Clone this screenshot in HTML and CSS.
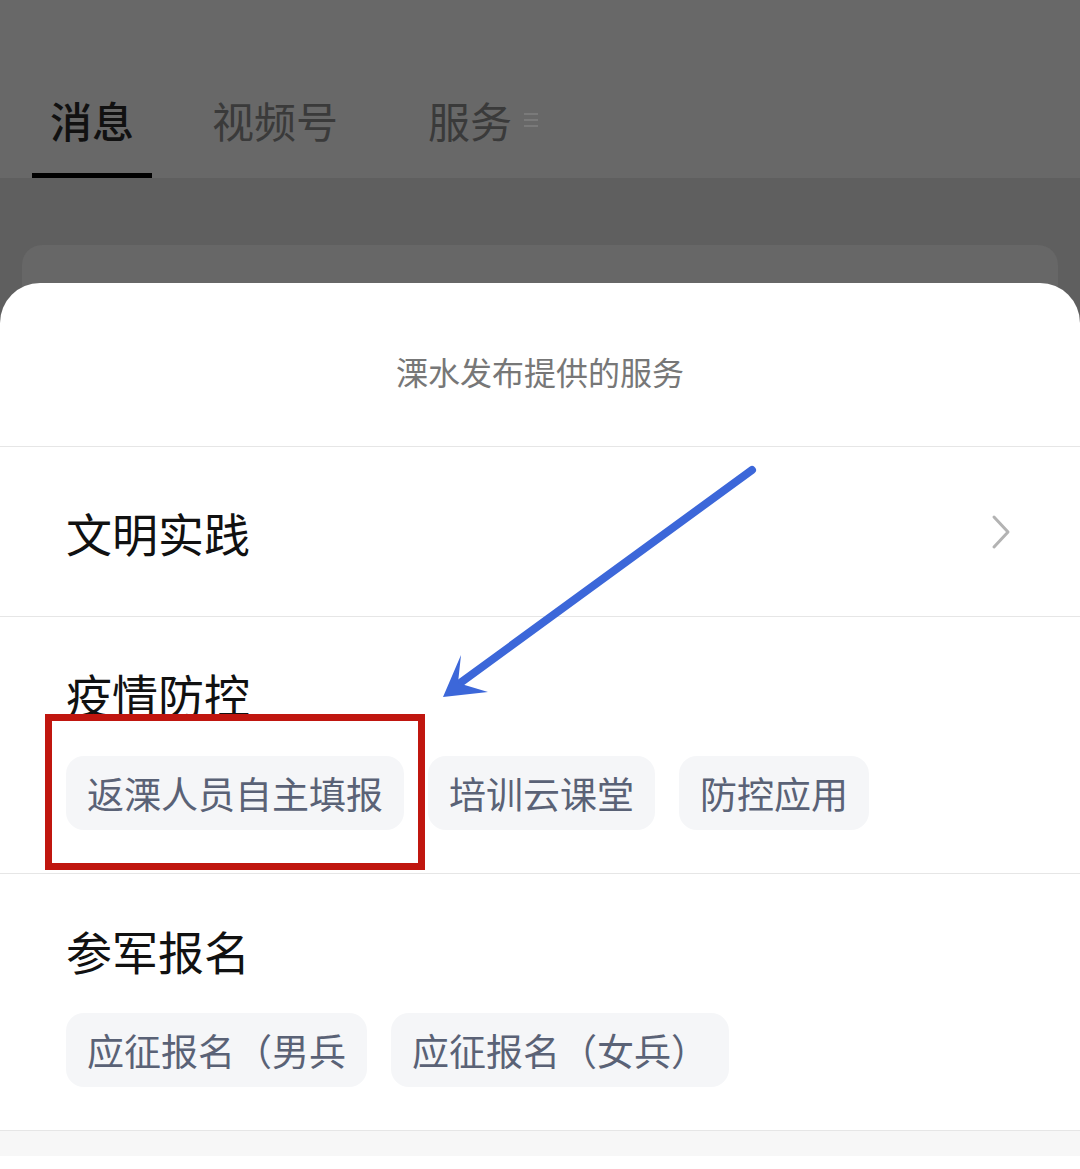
FILE: index.html
```html
<!DOCTYPE html>
<html lang="zh-CN">
<head>
  <meta charset="UTF-8" />
  <meta name="viewport" content="width=device-width, initial-scale=1" />
  <title>溧水发布提供的服务</title>
  <link rel="stylesheet" href="styles.css">
</head>
<body>
  <div class="screen">
    <header class="tabs">
      <div class="tab active">消息</div>
      <div class="tab">视频号</div>
      <div class="tab tab-service">服务<span class="menu-icon"><i></i><i></i><i></i></span></div>
    </header>

    <div class="backdrop">
      <div class="bg-card"></div>
    </div>

    <div class="sheet">
      <div class="sheet-title">溧水发布提供的服务</div>

      <div class="row-link">
        <span class="row-name">文明实践</span>
        <svg class="chevron" width="24" height="40" viewBox="0 0 24 40">
          <polyline points="4,5 18,20 4,35" fill="none" stroke="#b3b3b3" stroke-width="3" stroke-linecap="round" stroke-linejoin="round"/>
        </svg>
      </div>

      <div class="group">
        <div class="row-name">疫情防控</div>
        <div class="chips">
          <span class="chip">返溧人员自主填报</span>
          <span class="chip">培训云课堂</span>
          <span class="chip">防控应用</span>
        </div>
      </div>

      <div class="group">
        <div class="row-name">参军报名</div>
        <div class="chips">
          <span class="chip">应征报名（男兵</span>
          <span class="chip">应征报名（女兵）</span>
        </div>
      </div>

      <div class="band"></div>
    </div>

    <!-- annotations drawn over the screenshot -->
    <div class="mark"></div>
    <svg class="arrow" width="1080" height="1169" viewBox="0 0 1080 1169">
      <line x1="752" y1="470" x2="456" y2="686" stroke="#3c67d9" stroke-width="8" stroke-linecap="round"/>
      <polygon points="443,697 461,655 458,683 488,692" fill="#3c67d9"/>
    </svg>
  </div>
</body>
</html>
```

FILE: styles.css
```css
body {
  margin: 0;
  font-family: "Noto Sans CJK SC", "Noto Sans", sans-serif;
  background: #fff;
}
.screen {
  position: relative;
  width: 1080px;
  height: 1169px;
  overflow: hidden;
  background: #5f5f5f;
}
.tabs {
  height: 178px;
  background: #686868;
  display: flex;
  gap: 42px;
  padding-left: 32px;
  box-sizing: border-box;
}
.tab {
  padding: 92px 18px 25px;
  font-size: 42px;
  line-height: 56px;
  color: #3a3a3a;
  border-bottom: 5px solid transparent;
  display: flex;
  align-items: center;
}
.tab.active {
  color: #111;
  border-bottom-color: #000;
  font-weight: 500;
}
.tab-service {
  margin-left: 12px;
}
.menu-icon {
  display: flex;
  flex-direction: column;
  gap: 4px;
  margin-left: 12px;
}
.menu-icon i {
  display: block;
  width: 14px;
  height: 2px;
  background: #7a7a7a;
}
.backdrop {
  padding: 67px 22px 0;
}
.bg-card {
  height: 80px;
  background: #676767;
  border-radius: 20px 20px 0 0;
}
.sheet {
  margin-top: -42px;
  background: #fff;
  border-radius: 40px 40px 0 0;
  height: 900px;
}
.sheet-title {
  text-align: center;
  font-size: 32px;
  line-height: 42px;
  color: #777;
  padding: 67px 0 54px;
  border-bottom: 1px solid #e6e6e6;
}
.row-link {
  height: 169px;
  display: flex;
  align-items: center;
  justify-content: space-between;
  padding: 0 66px;
  border-bottom: 1px solid #e6e6e6;
}
.row-name {
  font-size: 46px;
  line-height: 52px;
  color: #111;
}
.group {
  padding: 50px 66px 43px;
  border-bottom: 1px solid #e6e6e6;
}
.group:last-of-type {
  border-bottom: none;
}
.chips {
  display: flex;
  gap: 24px;
  margin-top: 37px;
}
.chip {
  height: 74px;
  line-height: 74px;
  padding: 0 21px;
  font-size: 37px;
  color: #5a6276;
  background: #f5f6f8;
  border-radius: 18px;
  white-space: nowrap;
}
.band {
  height: 25px;
  background: #f7f7f7;
}
.mark {
  position: absolute;
  left: 45px;
  top: 714px;
  width: 380px;
  height: 156px;
  box-sizing: border-box;
  border: 7px solid #c0160f;
}
.arrow {
  position: absolute;
  left: 0;
  top: 0;
}
```
